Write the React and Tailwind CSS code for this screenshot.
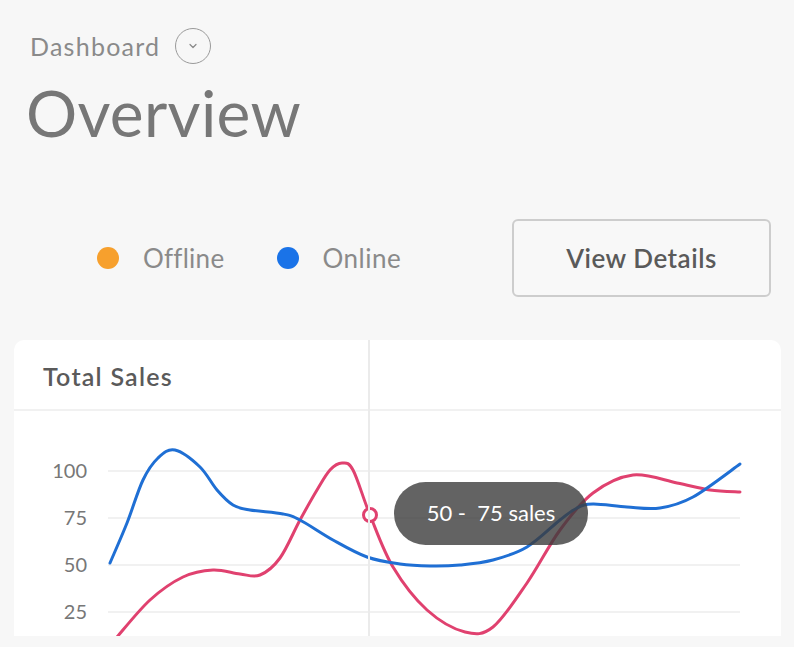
import React from 'react';

// chart points in page coordinates, shifted into the card's chart box below
const blue = [
  [110, 563], [127, 523], [143, 480], [158, 458], [175, 450], [200, 467], [217, 490],
  [233, 505], [250, 510], [283, 514], [300, 520], [333, 540], [367, 557], [400, 564],
  [430, 566], [460, 565], [493, 560], [527, 547], [560, 520], [577, 508], [593, 504],
  [627, 507], [660, 508], [693, 497], [740, 464],
];
const pink = [
  [117, 637], [150, 600], [183, 577], [213, 570], [240, 574], [260, 575], [280, 558],
  [300, 520], [317, 490], [330, 470], [342, 463], [353, 470], [370, 515], [393, 567],
  [427, 610], [465, 632], [493, 627], [527, 583], [560, 530], [593, 493], [633, 475],
  [677, 483], [710, 490], [740, 492],
];

const OX = 14;
const OY = 411;

function smooth(pts) {
  const p = pts.map(([x, y]) => [x - OX, y - OY]);
  let d = `M${p[0][0]},${p[0][1]}`;
  for (let i = 0; i < p.length - 1; i++) {
    const p0 = p[i - 1] || p[i];
    const p1 = p[i];
    const p2 = p[i + 1];
    const p3 = p[i + 2] || p2;
    const c1x = p1[0] + (p2[0] - p0[0]) / 6;
    const c1y = p1[1] + (p2[1] - p0[1]) / 6;
    const c2x = p2[0] - (p3[0] - p1[0]) / 6;
    const c2y = p2[1] - (p3[1] - p1[1]) / 6;
    d += ` C${c1x.toFixed(1)},${c1y.toFixed(1)} ${c2x.toFixed(1)},${c2y.toFixed(1)} ${p2[0]},${p2[1]}`;
  }
  return d;
}

const grid = [
  { label: '100', y: 471 },
  { label: '75', y: 518 },
  { label: '50', y: 565 },
  { label: '25', y: 612 },
];

export default function App() {
  return (
    <div className="h-[647px] w-[794px] overflow-hidden bg-[#f7f7f7] font-['Lato',sans-serif]">
      {/* Header */}
      <div className="pl-[30px] pt-[28px]">
        <div className="flex items-center gap-[15px]">
          <span className="text-[25px] leading-none tracking-[0.05em] text-[#8a8a8a]">Dashboard</span>
          <div className="flex h-[36px] w-[36px] items-center justify-center rounded-full border border-[#9a9a9a]">
            <svg width="10" height="6" viewBox="0 0 10 6" fill="none">
              <path d="M2 1.5 L5 4.5 L8 1.5" stroke="#888" strokeWidth="1.2" strokeLinecap="round" strokeLinejoin="round" />
            </svg>
          </div>
        </div>
        <h1 className="-ml-[4px] mt-[17px] text-[64px] leading-none tracking-[0.005em] text-[#777]">Overview</h1>
      </div>

      {/* Legend + button */}
      <div className="mt-[74px] flex h-[78px] items-center pr-[23px]">
        <div className="flex flex-1 items-center pl-[97px]">
          <span className="h-[22px] w-[22px] rounded-full bg-[#f7a02d]" />
          <span className="ml-[24px] text-[26px] tracking-[0.01em] text-[#8a8a8a]">Offline</span>
          <span className="ml-[53px] h-[22px] w-[22px] rounded-full bg-[#1a73e8]" />
          <span className="ml-[23px] text-[26px] tracking-[0.02em] text-[#8a8a8a]">Online</span>
        </div>
        <button className="h-[78px] w-[259px] rounded-[6px] border-2 border-[#cdcdcd] bg-[#f8f8f8] text-[26px] font-semibold tracking-[0.02em] text-[#5a5a5a]">
          View Details
        </button>
      </div>

      {/* Card */}
      <div className="relative ml-[14px] mr-[13px] mt-[43px] h-[296px] overflow-hidden rounded-t-[10px] bg-white">
        <div className="flex h-[71px] items-center border-b-2 border-[#f1f1f1] pl-[29px] pt-[4px]">
          <span className="text-[25px] font-semibold tracking-[0.05em] text-[#5a5a5a]">Total Sales</span>
        </div>
        <svg width="767" height="225" viewBox="0 0 767 225" className="block">
          {grid.map((g) => (
            <g key={g.label}>
              <line x1={108 - OX} x2={740 - OX} y1={g.y - OY} y2={g.y - OY} stroke="#f1f1f1" strokeWidth="2" />
              <text
                x={87 - OX}
                y={g.y - OY + 7}
                textAnchor="end"
                fontSize="20"
                fill="#777"
                fontFamily="Lato, sans-serif"
              >
                {g.label}
              </text>
            </g>
          ))}
          <path d={smooth(pink)} fill="none" stroke="#e0416f" strokeWidth="3" strokeLinecap="round" />
          <path d={smooth(blue)} fill="none" stroke="#1f6fd4" strokeWidth="3" strokeLinecap="round" />
          <circle cx={370 - OX} cy={515 - OY} r="6.5" fill="#fff" stroke="#e0416f" strokeWidth="3" />
        </svg>

        {/* crosshair */}
        <div className="absolute bottom-0 left-[354px] top-0 w-[2px] bg-[#ebebeb]" />

        {/* tooltip */}
        <div className="absolute left-[380px] top-[142px] flex h-[63px] w-[194px] items-center justify-center whitespace-pre rounded-full bg-[#3c3c3c]/80 pb-[3px] text-[22px] text-white">
          {'50 -  75 sales'}
        </div>
      </div>
    </div>
  );
}
